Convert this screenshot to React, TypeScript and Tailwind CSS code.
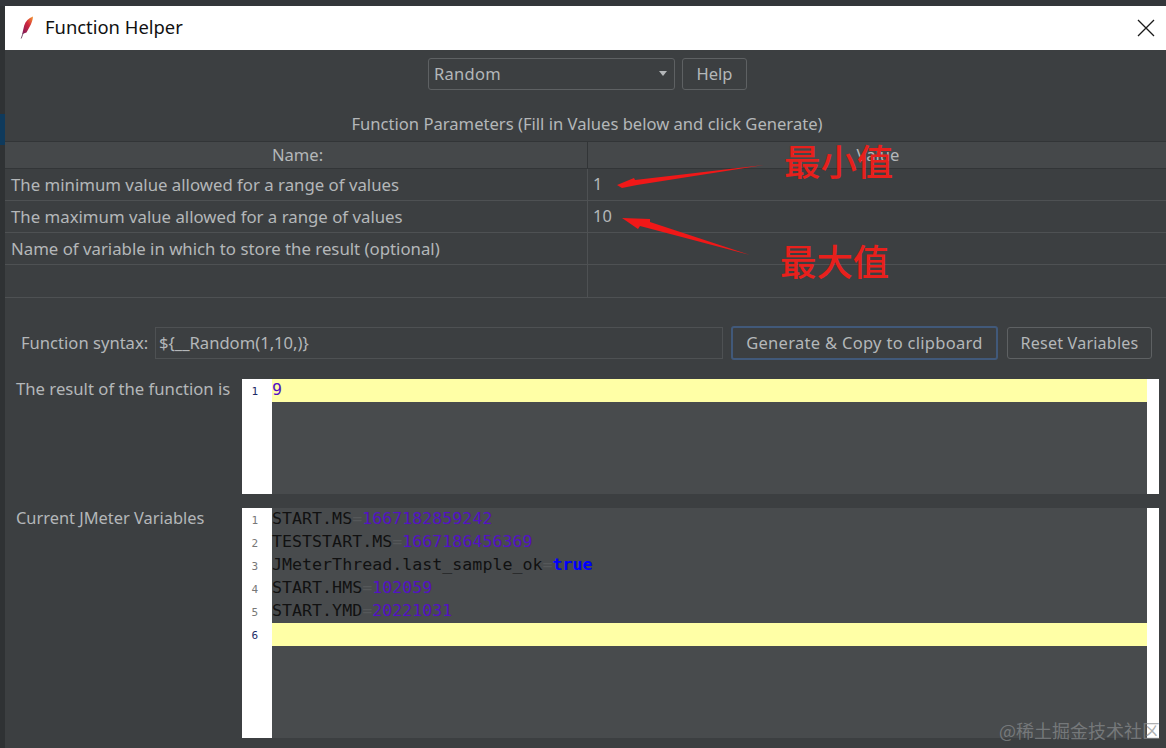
const sans = "font-['Noto_Sans','Open_Sans',sans-serif]";
const mono = "font-['DejaVu_Sans_Mono','Liberation_Mono',monospace]";

const rows = [
  ["The minimum value allowed for a range of values", "1", "h-[32px]"],
  ["The maximum value allowed for a range of values", "10", "h-[32px]"],
  ["Name of variable in which to store the result (optional)", "", "h-[32px]"],
  ["", "", "h-[33px]"],
];

const vars: [string, string, string][] = [
  ["START.MS", "1667182859242", "text-[#5312c4]"],
  ["TESTSTART.MS", "1667186456369", "text-[#5312c4]"],
  ["JMeterThread.last_sample_ok", "true", "text-[#0000ff] font-bold"],
  ["START.HMS", "102059", "text-[#5312c4]"],
  ["START.YMD", "20221031", "text-[#5312c4]"],
];

function Feather() {
  return (
    <svg width="14" height="24" viewBox="0 0 14 24" className="shrink-0">
      <defs>
        <linearGradient id="f" x1="0" y1="1" x2="1" y2="0">
          <stop offset="0" stopColor="#7a1a5a" />
          <stop offset="0.55" stopColor="#d0273f" />
          <stop offset="1" stopColor="#f59a2e" />
        </linearGradient>
      </defs>
      <path d="M13 0.5 C8.5 2 5.5 5.5 4.2 9.5 L2.2 18 L6.5 16.5 L9.5 11 C11.5 7.5 12.8 4 13 0.5 Z" fill="url(#f)" />
      <path d="M3.2 17 L1.2 22.5" stroke="#5a2a4a" strokeWidth="0.8" fill="none" />
    </svg>
  );
}

function Close() {
  return (
    <svg width="18" height="18" viewBox="0 0 18 18">
      <path d="M1 1 L17 17 M17 1 L1 17" stroke="#1a1a1a" strokeWidth="1.3" fill="none" />
    </svg>
  );
}

function Editor({ height, children, gutter, active }: { height: string; children: React.ReactNode; gutter: number; active: number }) {
  return (
    <div className={`${height} w-[917px] flex bg-white`}>
      <div className={`w-[30px] ${mono} text-[11px] leading-[23px] text-[#777] pr-[14px] pt-[1px] text-right`}>
        {Array.from({ length: gutter }, (_, i) => (
          <div key={i} className={i + 1 === active ? "text-[#1c2a66]" : ""}>{i + 1}</div>
        ))}
      </div>
      <div className={`flex-1 bg-[#484b4d] ${mono} text-[16.65px] leading-[21px] text-[#111]`}>{children}</div>
      <div className="w-[12px]" />
    </div>
  );
}

export default function App() {
  return (
    <div className={`w-[1166px] h-[748px] relative overflow-hidden flex flex-col bg-[#3c3f41] ${sans} text-[#b4b7b9]`}>
      <div className="h-[6px] bg-[#33363a] shrink-0" />
      <div className="flex flex-1 min-h-0">
        <div className="w-[5px] shrink-0 bg-[#2f3234] flex flex-col pt-[108px]">
          <div className="h-[31px] bg-[#0f3a5c]" />
        </div>
        <div className="flex-1 min-w-0 flex flex-col">
          <div className="h-[44px] bg-white text-[#111] flex items-center pl-[15px] pr-[11px] shrink-0">
            <Feather />
            <span className="ml-[11px] text-[18.4px] pb-[2px]">Function Helper</span>
            <span className="ml-auto flex"><Close /></span>
          </div>

          <div className="h-[47px] flex items-center justify-center gap-[7px] pl-[4px] shrink-0">
            <div className="w-[247px] h-[32px] border border-[#5e6163] rounded-[3px] flex items-center px-[5px] text-[16.5px] tracking-[0.3px]">
              <span className="pt-[1px]">Random</span>
              <span className="ml-auto mr-[2px] w-0 h-0 border-x-[4px] border-x-transparent border-t-[5px] border-t-[#b4b7b9]" />
            </div>
            <div className="w-[65px] h-[32px] border border-[#5e6163] rounded-[3px] flex items-center justify-center text-[16.5px] pt-[1px]">Help</div>
          </div>

          <div className="h-[44px] flex items-center justify-center text-[16.6px] shrink-0 pt-[10px] pl-[3px]">
            Function Parameters (Fill in Values below and click Generate)
          </div>

          <div className="border-t border-[#323537] shrink-0">
            <div className="h-[27px] flex bg-[#45484a] border-b border-[#323537] text-[16.6px]">
              <div className="w-[583px] flex items-center justify-center border-r border-[#323537] pl-[3px]">Name:</div>
              <div className="flex-1 flex items-center justify-center pl-[2px]">Value</div>
            </div>
            {rows.map(([a, b, h], i) => (
              <div key={i} className={`${h} flex border-b border-[#4e5153] text-[16.8px]`}>
                <div className="w-[583px] flex items-center pl-[6px] border-r border-[#4e5153]">{a}</div>
                <div className="flex-1 flex items-center pl-[5px] text-[16.4px]">{b}</div>
              </div>
            ))}
          </div>

          <div className="h-[81px] flex items-start pl-[16px] pt-[28px] shrink-0 text-[16.6px]">
            <span className="w-[134px] h-[34px] flex items-center">Function syntax:</span>
            <div className="w-[568px] h-[32px] mt-[1px] border border-[#4e5153] flex items-center pl-[3px]">{"${__Random(1,10,)}"}</div>
            <div className="ml-[8px] w-[267px] h-[34px] border-2 border-[#41597a] rounded-[3px] flex items-center justify-center text-[16.5px] tracking-[0.3px]">Generate &amp; Copy to clipboard</div>
            <div className="ml-[9px] w-[145px] h-[32px] mt-[1px] border border-[#5e6163] rounded-[3px] flex items-center justify-center text-[16.1px] tracking-[0.2px]">Reset Variables</div>
          </div>

          <div className="flex pl-[11px] shrink-0">
            <div className="w-[226px] text-[16.7px] leading-[20px]">The result of the function is</div>
            <Editor height="h-[115px]" gutter={1} active={1}>
              <div className="h-[23px] bg-[#ffffa6] text-[#5312c4]">9</div>
            </Editor>
          </div>

          <div className="flex pl-[11px] pt-[14px] shrink-0">
            <div className="w-[226px] text-[16.4px] leading-[20px]">Current JMeter Variables</div>
            <Editor height="h-[230px]" gutter={6} active={6}>
              {vars.map(([k, v, c]) => (
                <div key={k} className="h-[23px] whitespace-nowrap">
                  {k}<span className="text-[#55585a]">=</span><span className={c}>{v}</span>
                </div>
              ))}
              <div className="h-[23px] bg-[#ffffa6]" />
            </Editor>
          </div>
        </div>
      </div>

      <svg width="180" height="110" viewBox="0 0 180 110" className="absolute left-[600px] top-[155px]">
        <path d="M164 10 L35 25 L34 23 L17 30 L22 33 L37 30 Z" fill="#f01818" />
        <path d="M150 100 L50 67 L50 64 L22 63 L38 74 L40 71 Z" fill="#f01818" />
      </svg>
      <div className="absolute left-[784px] top-[136px] text-[36.4px] leading-[48px] font-medium text-[#e8201c] font-['Noto_Sans_CJK_SC',sans-serif]">最小值</div>
      <div className="absolute left-[780px] top-[236px] text-[36.4px] leading-[48px] font-medium text-[#e8201c] font-['Noto_Sans_CJK_SC',sans-serif]">最大值</div>
      <div className="absolute right-[6px] bottom-[6px] text-[18px] leading-[24px] text-[#8a8d8f]/70 font-['Noto_Sans_CJK_SC',sans-serif]">@稀土掘金技术社区</div>
    </div>
  );
}
